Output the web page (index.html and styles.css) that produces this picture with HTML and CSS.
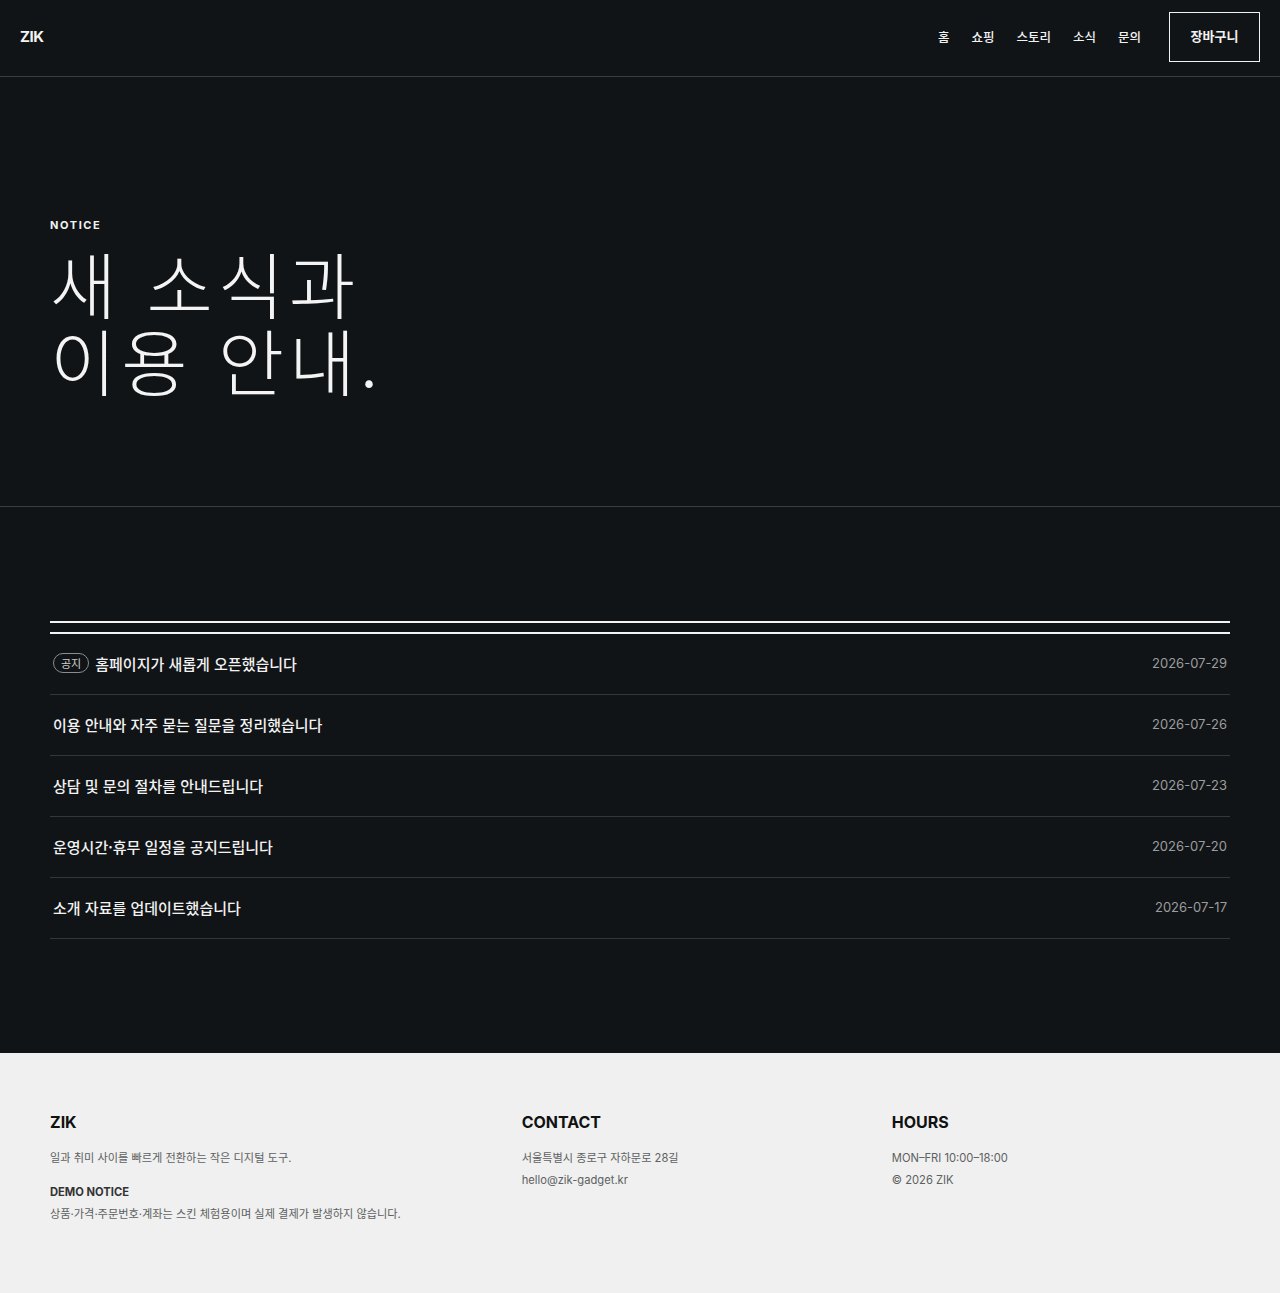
FILE: index.html
```html
<!DOCTYPE html>
<html lang="ko">
<head>
<meta charset="utf-8">
<title>ZIK 소식</title>
<link rel="stylesheet" href="styles.css">
</head>
<body>
<header class="site-header">
  <a class="logo" href="#">ZIK</a>
  <nav class="nav">
    <a href="#">홈</a>
    <a href="#">쇼핑</a>
    <a href="#">스토리</a>
    <a href="#">소식</a>
    <a href="#">문의</a>
    <a class="cart" href="#">장바구니</a>
  </nav>
</header>

<section class="hero">
  <p class="eyebrow">NOTICE</p>
  <h1 class="hero-title"><span class="line">새 소식과</span><span class="line">이용 안내.</span></h1>
</section>

<main class="list-section">
  <div class="double-rule"></div>
  <ul class="notice-list">
    <li class="notice-row"><span class="title"><span class="badge">공지</span>홈페이지가 새롭게 오픈했습니다</span><span class="date">2026-07-29</span></li>
    <li class="notice-row"><span class="title">이용 안내와 자주 묻는 질문을 정리했습니다</span><span class="date">2026-07-26</span></li>
    <li class="notice-row"><span class="title">상담 및 문의 절차를 안내드립니다</span><span class="date">2026-07-23</span></li>
    <li class="notice-row"><span class="title">운영시간·휴무 일정을 공지드립니다</span><span class="date">2026-07-20</span></li>
    <li class="notice-row"><span class="title">소개 자료를 업데이트했습니다</span><span class="date">2026-07-17</span></li>
  </ul>
</main>

<footer class="site-footer">
  <div class="footer-col">
    <h3>ZIK</h3>
    <p>일과 취미 사이를 빠르게 전환하는 작은 디지털 도구.</p>
    <h4>DEMO NOTICE</h4>
    <p>상품·가격·주문번호·계좌는 스킨 체험용이며 실제 결제가 발생하지 않습니다.</p>
  </div>
  <div class="footer-col">
    <h3>CONTACT</h3>
    <p>서울특별시 종로구 자하문로 28길</p>
    <p>hello@zik-gadget.kr</p>
  </div>
  <div class="footer-col">
    <h3>HOURS</h3>
    <p>MON–FRI 10:00–18:00</p>
    <p>© 2026 ZIK</p>
  </div>
</footer>
</body>
</html>
```

FILE: styles.css
```css
* { box-sizing: border-box; }
html, body { margin: 0; padding: 0; }
body {
  background: #111416;
  color: #f2f2f2;
  font-family: Inter, "Noto Sans CJK KR", sans-serif;
}
a { color: inherit; text-decoration: none; }

.site-header {
  height: 77px;
  border-bottom: 1px solid #3b3e40;
  display: flex;
  align-items: center;
  justify-content: space-between;
  padding: 0 20px 3px;
}
.logo {
  font-size: 15px;
  font-weight: 700;
  letter-spacing: -0.4px;
  color: #f4f4f4;
}
.nav {
  display: flex;
  align-items: center;
  gap: 22px;
  font-size: 12.5px;
  font-weight: 500;
  font-family: "Noto Sans CJK KR", sans-serif;
}
.nav .cart {
  margin-left: 6px;
  width: 91px;
  height: 50px;
  border: 1px solid #f2f2f2;
  display: flex;
  align-items: center;
  justify-content: center;
  font-size: 13px;
  font-weight: 700;
  padding-bottom: 2px;
}

.hero {
  padding: 142px 50px 109px;
  border-bottom: 1px solid #3b3e40;
}
.eyebrow {
  margin: 0 0 12px;
  font-size: 11px;
  line-height: 12px;
  font-weight: 700;
  letter-spacing: 1.6px;
}
.hero-title {
  margin: 0;
  font-family: "Noto Sans CJK KR", sans-serif;
  font-weight: 300;
  font-size: 72px;
  line-height: 77px;
  letter-spacing: 5px;
  color: #f4f4f4;
}
.hero-title .line {
  display: block;
  height: 77px;
}

.list-section {
  padding: 114px 50px 114px;
}
.double-rule {
  height: 13px;
  border-top: 2px solid #f4f4f4;
  border-bottom: 2px solid #f4f4f4;
}
.notice-list {
  list-style: none;
  margin: 0;
  padding: 0;
}
.notice-row {
  height: 61px;
  border-bottom: 1px solid #34373a;
  display: flex;
  align-items: center;
  justify-content: space-between;
  padding: 0 3px 2px;
}
.title {
  display: flex;
  align-items: center;
  font-family: "Noto Sans CJK KR", sans-serif;
  font-size: 15px;
  font-weight: 500;
  color: #f2f2f2;
}
.badge {
  display: inline-flex;
  align-items: center;
  justify-content: center;
  height: 20px;
  padding: 0 7px;
  margin-right: 6px;
  border: 1px solid #8a8d8f;
  border-radius: 10px;
  font-size: 11px;
  font-weight: 400;
  color: #cfcfcf;
}
.date {
  font-size: 13px;
  color: #9b9d9f;
}

.site-footer {
  background: #eff0ef;
  color: #111;
  display: grid;
  grid-template-columns: 1.3fr 1fr 1fr;
  gap: 32px;
  padding: 59px 50px 70px;
  min-height: 240px;
}
.footer-col h3 {
  margin: 0 0 15px;
  font-size: 16px;
  font-weight: 700;
  color: #111;
}
.footer-col h4 {
  margin: 16px 0 4px;
  font-size: 11.2px;
  font-weight: 700;
  color: #333;
}
.footer-col p {
  margin: 0;
  font-size: 11.2px;
  line-height: 22px;
  color: #5e6062;
  font-family: Inter, "Noto Sans CJK KR", sans-serif;
}
```
